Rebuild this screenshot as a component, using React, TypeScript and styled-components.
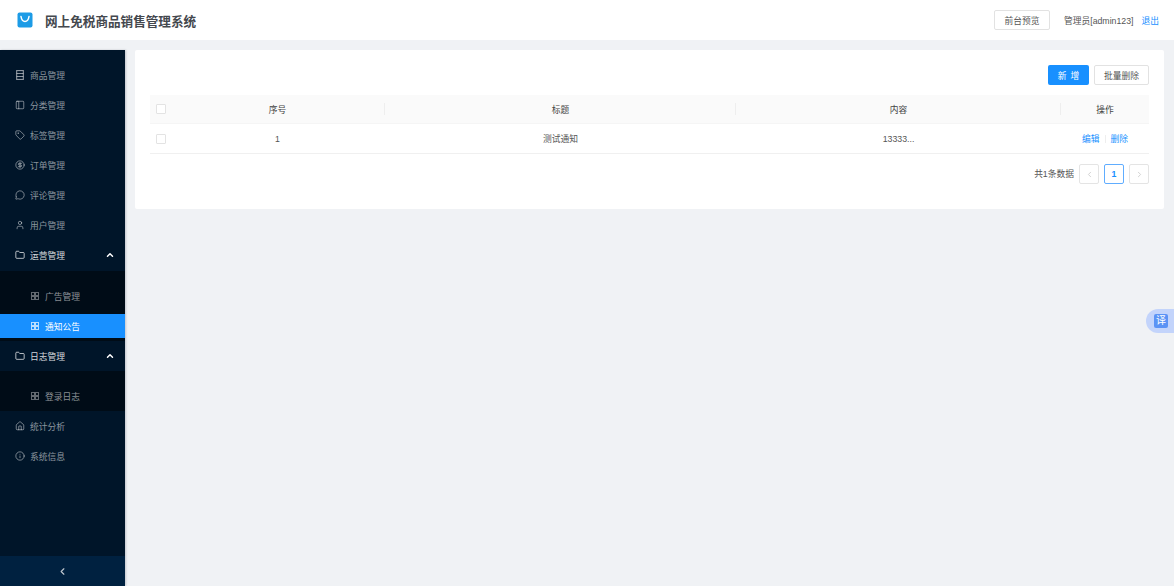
import React from "react";
import styled, { createGlobalStyle } from "styled-components";
import {
  PanelLeft, Tag, CircleDollarSign, MessageCircle, User, Folder, ChevronUp,
  ChevronLeft, ChevronRight, House, Info,
} from "lucide-react";

const Global = createGlobalStyle`
  html, body { margin: 0; padding: 0; height: 100%; background: #f0f2f5; }
  body { font-family: "Liberation Sans", "Noto Sans CJK SC", sans-serif; overflow: hidden; }
  #root { height: 586px; }
`;

const Page = styled.div`
  display: flex; flex-direction: column; width: 1174px; height: 586px; background: #f0f2f5; position: relative;
`;
const Header = styled.header`
  height: 40px; flex: none; background: #fff; display: flex; align-items: center;
  padding: 0 15px 0 17px; box-sizing: border-box;
`;
const Logo = styled.svg`width: 16px; height: 16px; flex: none;`;
const Title = styled.h1`
  margin: 0 0 0 12px; font-size: 12.6px; font-weight: 700; color: #44484e; flex: 1;
`;
const GhostButton = styled.button<{ $w: number }>`
  width: ${p => p.$w}px; height: 20px; padding: 0; background: #fff; border: 1px solid #e2e2e2; border-radius: 2px;
  font: inherit; font-size: 8.75px; color: #555; white-space: nowrap;
`;
const UserName = styled.span`margin-left: 14px; font-size: 8.75px; color: #555; white-space: nowrap;`;
const Logout = styled.a`margin-left: 8px; font-size: 8.75px; color: #1890ff; white-space: nowrap;`;

const Body = styled.div`display: flex; flex: 1; padding-top: 10px; min-height: 0;`;
const Sider = styled.aside`
  width: 125px; flex: none; background: #001529; display: flex; flex-direction: column;
  box-shadow: 1px 0 2px rgba(0,21,41,.2);
`;
const Menu = styled.nav`flex: 1; padding-top: 10px; display: flex; flex-direction: column;`;
const Item = styled.div<{ $open?: boolean }>`
  height: 30px; flex: none; display: flex; align-items: center; padding: 0 10px 0 15px; gap: 5px;
  font-size: 8.75px; color: ${p => (p.$open ? "rgba(255,255,255,.85)" : "rgba(255,255,255,.55)")};
  & > svg { width: 10px; height: 10px; flex: none; }
`;
const Caret = styled(ChevronUp)`margin-left: auto; color: #fff; stroke-width: 3.5;`;
const Sub = styled.div<{ $offset?: number }>`
  background: #000c17; display: flex; flex-direction: column; gap: 6px; padding: 13px 0 3px;
  margin-top: ${p => p.$offset ?? 0}px;
`;
const SubItem = styled.div<{ $active?: boolean }>`
  height: 24px; display: flex; align-items: center; gap: 6px; padding-left: 31px;
  font-size: 8.75px; background: ${p => (p.$active ? "#1890ff" : "transparent")};
  color: ${p => (p.$active ? "#fff" : "rgba(255,255,255,.55)")};
`;
const GridGlyph = styled.svg`width: 8px; height: 8px; flex: none; opacity: .7;`;
const Collapse = styled.div`
  height: 30px; flex: none; background: #002140; display: flex; align-items: center; justify-content: center;
  color: rgba(255,255,255,.75);
`;

const Main = styled.main`flex: 1; padding: 0 10px; min-width: 0;`;
const Card = styled.section`
  background: #fff; border-radius: 2px; height: 159px; box-sizing: border-box; padding: 15px 15px 0;
`;
const Toolbar = styled.div`display: flex; justify-content: flex-end; gap: 5px; height: 20px; margin-bottom: 10px;`;
const PrimaryButton = styled.button`
  width: 41px; height: 20px; padding: 0; background: #1890ff; border: 0; border-radius: 2px;
  color: #fff; font: inherit; font-size: 8.75px; white-space: pre; word-spacing: 1.5px;
`;
const Row = styled.div<{ $head?: boolean }>`
  display: grid; grid-template-columns: 20px 215px 351px 325px 88px; box-sizing: border-box;
  height: ${p => (p.$head ? 29 : 30)}px; align-items: center;
  background: ${p => (p.$head ? "#fafafa" : "#fff")};
  border-bottom: 1px solid ${p => (p.$head ? "#f5f5f5" : "#f0f0f0")};
  font-size: 8.75px; color: ${p => (p.$head ? "#444" : "#555")};
`;
const Cell = styled.div<{ $sep?: boolean }>`
  height: 100%; display: flex; align-items: center; justify-content: center; gap: 5px; position: relative;
  ${p => p.$sep && `&::after { content: ""; position: absolute; right: 0; top: 8px; bottom: 8px; width: 1px; background: #eeeeee; }`}
`;
const Check = styled.span`
  width: 10px; height: 10px; box-sizing: border-box; border: 1px solid #e3e3e3; border-radius: 1px; background: #fff;
  margin-left: 1px;
`;
const LinkText = styled.a`color: #1890ff; font-size: 8.75px;`;
const Divider = styled.i`width: 1px; height: 8px; background: #eee;`;
const Pager = styled.div`
  display: flex; align-items: center; justify-content: flex-end; gap: 5px; margin-top: 10px;
  font-size: 8.75px; color: #555;
`;
const PagerLabel = styled.span`position: relative; top: -1px;`;
const PageBox = styled.span<{ $active?: boolean }>`
  width: 20px; height: 20px; box-sizing: border-box; display: flex; align-items: center; justify-content: center;
  border: 1px solid ${p => (p.$active ? "#60adff" : "#e4e4e4")}; border-radius: 2px;
  color: ${p => (p.$active ? "#1890ff" : "#c4c4c4")}; font-size: 8.75px; font-weight: 700;
`;
const Float = styled.div`
  position: absolute; right: 0; top: 309px; width: 28px; height: 24px; border-radius: 12px 0 0 12px;
  background: #c3d4fb; display: flex; align-items: center; padding-left: 8px; box-sizing: border-box;
`;
const FloatIcon = styled.span`
  width: 14px; height: 14px; background: #5b93f5; border-radius: 2px; color: #fff; font-size: 10px; line-height: 14px;
  text-align: center; display: block;
`;

const ListGlyph = (p: React.SVGProps<SVGSVGElement>) => (
  <svg viewBox="0 0 9 9" fill="none" stroke="currentColor" strokeWidth="1" {...p}>
    <rect x="1.500" y="0.500" width="6" height="8" />
    <path d="M1.500 3.200h6M1.500 5.800h6" />
  </svg>
);
const Grid = () => (
  <GridGlyph viewBox="0 0 8 8" fill="none" stroke="currentColor" strokeWidth="1">
    <rect x="0.500" y="0.500" width="3" height="3" />
    <rect x="4.500" y="0.500" width="3" height="3" />
    <rect x="0.500" y="4.500" width="3" height="3" />
    <rect x="4.500" y="4.500" width="3" height="3" />
  </GridGlyph>
);

const top = [
  [ListGlyph, "商品管理"], [PanelLeft, "分类管理"], [Tag, "标签管理"],
  [CircleDollarSign, "订单管理"], [MessageCircle, "评论管理"], [User, "用户管理"],
] as const;

export default function App() {
  return (
    <Page>
      <Global />
      <Header>
        <Logo viewBox="0 0 16 16">
          <rect x="0.5" y="0.5" width="15" height="15" rx="2" fill="#1c9be6" />
          <path d="M4 4.500c.6 3.600 2.200 5 4 5s3.400-1.400 4-5" fill="none" stroke="#fff" strokeWidth="1.500" strokeLinecap="round" />
        </Logo>
        <Title>网上免税商品销售管理系统</Title>
        <GhostButton $w={56}>前台预览</GhostButton>
        <UserName>管理员[admin123]</UserName>
        <Logout>退出</Logout>
      </Header>
      <Body>
        <Sider>
          <Menu>
            {top.map(([I, t]) => <Item key={t}><I />{t}</Item>)}
            <Item $open><Folder />运营管理<Caret /></Item>
            <Sub $offset={1}>
              <SubItem><Grid />广告管理</SubItem>
              <SubItem $active><Grid />通知公告</SubItem>
            </Sub>
            <Item $open><Folder />日志管理<Caret /></Item>
            <Sub>
              <SubItem><Grid />登录日志</SubItem>
            </Sub>
            <Item><House />统计分析</Item>
            <Item><Info />系统信息</Item>
          </Menu>
          <Collapse><ChevronLeft size={11} strokeWidth={2.5} /></Collapse>
        </Sider>
        <Main>
          <Card>
            <Toolbar>
              <PrimaryButton>新 增</PrimaryButton>
              <GhostButton $w={55}>批量删除</GhostButton>
            </Toolbar>
            <Row $head>
              <Cell><Check /></Cell>
              <Cell $sep>序号</Cell>
              <Cell $sep>标题</Cell>
              <Cell $sep>内容</Cell>
              <Cell>操作</Cell>
            </Row>
            <Row>
              <Cell><Check /></Cell>
              <Cell>1</Cell>
              <Cell>测试通知</Cell>
              <Cell>13333...</Cell>
              <Cell><LinkText>编辑</LinkText><Divider /><LinkText>删除</LinkText></Cell>
            </Row>
            <Pager>
              <PagerLabel>共1条数据</PagerLabel>
              <PageBox><ChevronLeft size={9} /></PageBox>
              <PageBox $active>1</PageBox>
              <PageBox><ChevronRight size={9} /></PageBox>
            </Pager>
          </Card>
        </Main>
      </Body>
      <Float><FloatIcon>译</FloatIcon></Float>
    </Page>
  );
}
